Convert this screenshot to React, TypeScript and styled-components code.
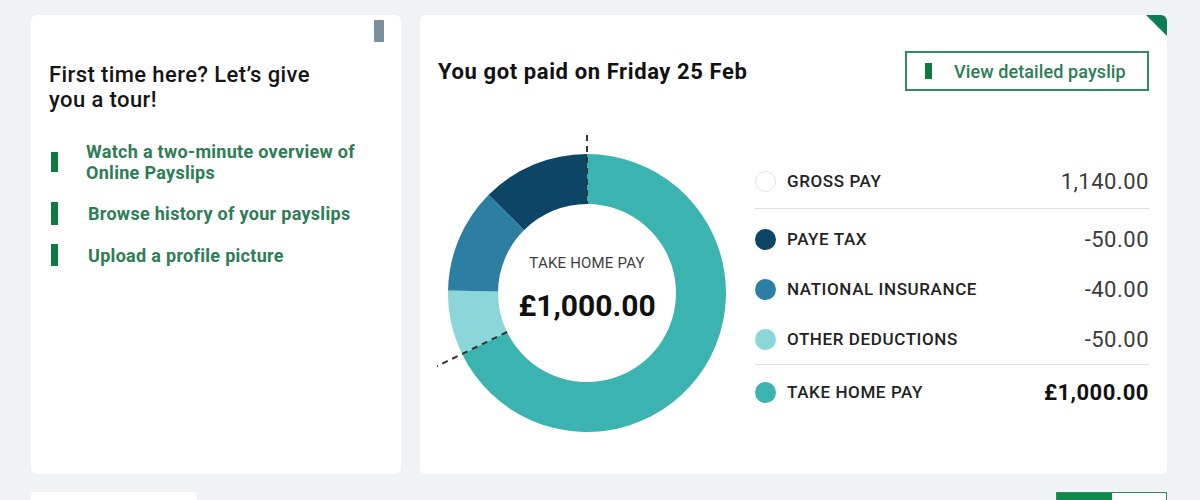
import React from 'react'
import styled, { createGlobalStyle } from 'styled-components'

const GlobalStyle = createGlobalStyle`
  body {
    margin: 0;
    background: #f0f3f5;
    font-family: Roboto, "Liberation Sans", sans-serif;
    color: #1d1d1d;
  }
`

const Page = styled.div`
  width: 1200px;
  height: 500px;
  overflow: hidden;
  box-sizing: border-box;
  padding: 15px 33px 0 31px;
`

const Grid = styled.div`
  display: grid;
  grid-template-columns: 370px 747px;
  column-gap: 19px;
`

const Card = styled.section`
  position: relative;
  background: #fff;
  border-radius: 6px;
  height: 459px;
  box-sizing: border-box;
  padding: 0 18px;
  display: flex;
  flex-direction: column;
  overflow: hidden;
`

const TabRow = styled.div`
  display: flex;
  justify-content: flex-end;
  margin-top: 5px;
  margin-right: -1px;
`

const Tab = styled.div`
  width: 10px;
  height: 22px;
  border-radius: 1px;
  background: #7b8e9b;
`

const TourTitle = styled.h2`
  margin: 20px 0 0;
  font-size: 22px;
  line-height: 25px;
  font-weight: 500;
  letter-spacing: 0.4px;
  color: #151515;
  width: 280px;
`

const LinkList = styled.ul`
  list-style: none;
  margin: 29px 0 0;
  padding: 0;
  display: flex;
  flex-direction: column;
  row-gap: 19px;
`

const LinkItem = styled.li`
  display: flex;
  align-items: center;
  column-gap: 28px;
  padding-left: 2px;
`

const Bar = styled.span<{ $h?: number }>`
  flex: none;
  width: 7px;
  height: ${p => p.$h ?? 20}px;
  background: #0f7a40;
`

const LinkText = styled.a<{ $shift?: number }>`
  font-size: 18px;
  line-height: 21px;
  font-weight: 700;
  letter-spacing: 0.3px;
  color: #2d7d55;
  text-decoration: none;
  width: 280px;
  margin-left: ${p => p.$shift ?? 0}px;
`

const Corner = styled.div`
  position: absolute;
  top: 0;
  right: 0;
  width: 0;
  height: 0;
  border-top: 21px solid #0b7d55;
  border-left: 21px solid transparent;
`

const Header = styled.div`
  margin-top: 36px;
  height: 40px;
  display: flex;
  align-items: center;
  justify-content: space-between;
`

const PaidTitle = styled.h2`
  margin: 0;
  font-size: 22px;
  font-weight: 700;
  letter-spacing: 0.6px;
  color: #111;
`

const OutlineButton = styled.button`
  width: 244px;
  height: 40px;
  box-sizing: border-box;
  border: 2px solid #2e8d5f;
  background: #fff;
  padding: 0 0 0 18px;
  display: flex;
  align-items: center;
  column-gap: 22px;
  font-family: inherit;
  font-size: 18px;
  font-weight: 500;
  letter-spacing: 0.1px;
  color: #2a7d55;
  cursor: pointer;
`

const ChartBody = styled.div`
  display: flex;
  margin-top: 37px;
  margin-left: -1px;
`

const Donut = styled.div`
  position: relative;
  width: 300px;
  height: 310px;
  flex: none;
`

const DonutCenter = styled.div`
  position: absolute;
  left: 150px;
  top: 165px;
  transform: translate(-50%, -50%);
  display: flex;
  flex-direction: column;
  align-items: center;
  row-gap: 16px;
`

const CenterLabel = styled.span`
  font-size: 15px;
  color: #3f3f3f;
  letter-spacing: 0.2px;
  margin-top: -10px;
`

const CenterAmount = styled.span`
  font-size: 30px;
  font-weight: 700;
  color: #111;
`

const Legend = styled.div`
  flex: 1;
  margin: 26px 0 0 18px;
  display: flex;
  flex-direction: column;
`

const Row = styled.div<{ $h: number }>`
  height: ${p => p.$h}px;
  display: flex;
  align-items: center;
`

const Dot = styled.span<{ $color: string }>`
  flex: none;
  width: 21px;
  height: 21px;
  border-radius: 50%;
  box-sizing: border-box;
  background: ${p => p.$color};
  border: ${p => (p.$color === '#fff' ? '1.5px solid #e0e3e5' : 'none')};
`

const Label = styled.span`
  margin-left: 11px;
  flex: 1;
  font-size: 17px;
  font-weight: 500;
  letter-spacing: 0.6px;
  color: #222;
`

const Value = styled.span<{ $strong?: boolean }>`
  font-size: 22px;
  font-weight: ${p => (p.$strong ? 700 : 400)};
  letter-spacing: 0.5px;
  color: ${p => (p.$strong ? '#111' : '#3a3a3a')};
`

const Divider = styled.hr<{ $after?: number }>`
  margin: 0 0 ${p => p.$after ?? 0}px;
  border: none;
  height: 1px;
  background: #dedfe0;
`

const BottomRow = styled.div`
  margin-top: 18px;
  display: flex;
  justify-content: space-between;
`

const StubCard = styled.div`
  width: 166px;
  height: 20px;
  background: #fff;
  border-radius: 4px 4px 0 0;
`

const Toggle = styled.div`
  display: flex;
  width: 111px;
  height: 20px;
  box-sizing: border-box;
  border: 1px solid #2e8d5f;
`

const ToggleHalf = styled.span<{ $on?: boolean }>`
  flex: 1;
  background: ${p => (p.$on ? '#0b8a4a' : '#fff')};
`

const CX = 150
const CY = 165
const R = 139
const RI = 89

function pt(angle: number, r: number) {
  const a = (angle * Math.PI) / 180
  return [CX + r * Math.sin(a), CY - r * Math.cos(a)]
}

function arc(a0: number, a1: number) {
  const [x0, y0] = pt(a0, R)
  const [x1, y1] = pt(a1, R)
  const [x2, y2] = pt(a1, RI)
  const [x3, y3] = pt(a0, RI)
  const large = a1 - a0 > 180 ? 1 : 0
  return `M${x0} ${y0} A${R} ${R} 0 ${large} 1 ${x1} ${y1} L${x2} ${y2} A${RI} ${RI} 0 ${large} 0 ${x3} ${y3} Z`
}

const segments = [
  { from: 0, to: 244, color: '#3bb3b0' },
  { from: 244, to: 271, color: '#8ad6d8' },
  { from: 271, to: 315, color: '#2c7ea3' },
  { from: 315, to: 360, color: '#0c4566' },
]

const rows = [
  { label: 'PAYE TAX', value: '-50.00', color: '#0c4566' },
  { label: 'NATIONAL INSURANCE', value: '-40.00', color: '#2c7ea3' },
  { label: 'OTHER DEDUCTIONS', value: '-50.00', color: '#8ad6d8' },
]

function PayDonut() {
  const [lx0, ly0] = pt(244, RI)
  const [lx1, ly1] = pt(244, 168)
  return (
    <Donut>
      <svg width="300" height="310" viewBox="0 0 300 310">
        {segments.map(s => (
          <path key={s.from} d={arc(s.from, s.to)} fill={s.color} />
        ))}
        <line x1={CX} y1={7} x2={CX} y2={CY - RI} stroke="#333" strokeWidth="2" strokeDasharray="6 5" />
        <line x1={lx0} y1={ly0} x2={lx1} y2={ly1} stroke="#333" strokeWidth="2" strokeDasharray="6 5" />
      </svg>
      <DonutCenter>
        <CenterLabel>TAKE HOME PAY</CenterLabel>
        <CenterAmount>£1,000.00</CenterAmount>
      </DonutCenter>
    </Donut>
  )
}

export default function App() {
  return (
    <>
      <GlobalStyle />
      <Page>
        <Grid>
          <Card>
            <TabRow>
              <Tab />
            </TabRow>
            <TourTitle>First time here? Let’s give you a tour!</TourTitle>
            <LinkList>
              <LinkItem>
                <Bar />
                <LinkText>Watch a two-minute overview of Online Payslips</LinkText>
              </LinkItem>
              <LinkItem>
                <Bar $h={23} />
                <LinkText $shift={2}>Browse history of your payslips</LinkText>
              </LinkItem>
              <LinkItem>
                <Bar $h={22} />
                <LinkText $shift={2}>Upload a profile picture</LinkText>
              </LinkItem>
            </LinkList>
          </Card>

          <Card>
            <Corner />
            <Header>
              <PaidTitle>You got paid on Friday 25 Feb</PaidTitle>
              <OutlineButton>
                <Bar $h={16} />
                View detailed payslip
              </OutlineButton>
            </Header>
            <ChartBody>
              <PayDonut />
              <Legend>
                <Row $h={54}>
                  <Dot $color="#fff" />
                  <Label>GROSS PAY</Label>
                  <Value>1,140.00</Value>
                </Row>
                <Divider $after={5} />
                {rows.map(r => (
                  <Row $h={50} key={r.label}>
                    <Dot $color={r.color} />
                    <Label>{r.label}</Label>
                    <Value>{r.value}</Value>
                  </Row>
                ))}
                <Divider />
                <Row $h={54}>
                  <Dot $color="#3bb3b0" />
                  <Label>TAKE HOME PAY</Label>
                  <Value $strong>£1,000.00</Value>
                </Row>
              </Legend>
            </ChartBody>
          </Card>
        </Grid>
        <BottomRow>
          <StubCard />
          <Toggle>
            <ToggleHalf $on />
            <ToggleHalf />
          </Toggle>
        </BottomRow>
      </Page>
    </>
  )
}
